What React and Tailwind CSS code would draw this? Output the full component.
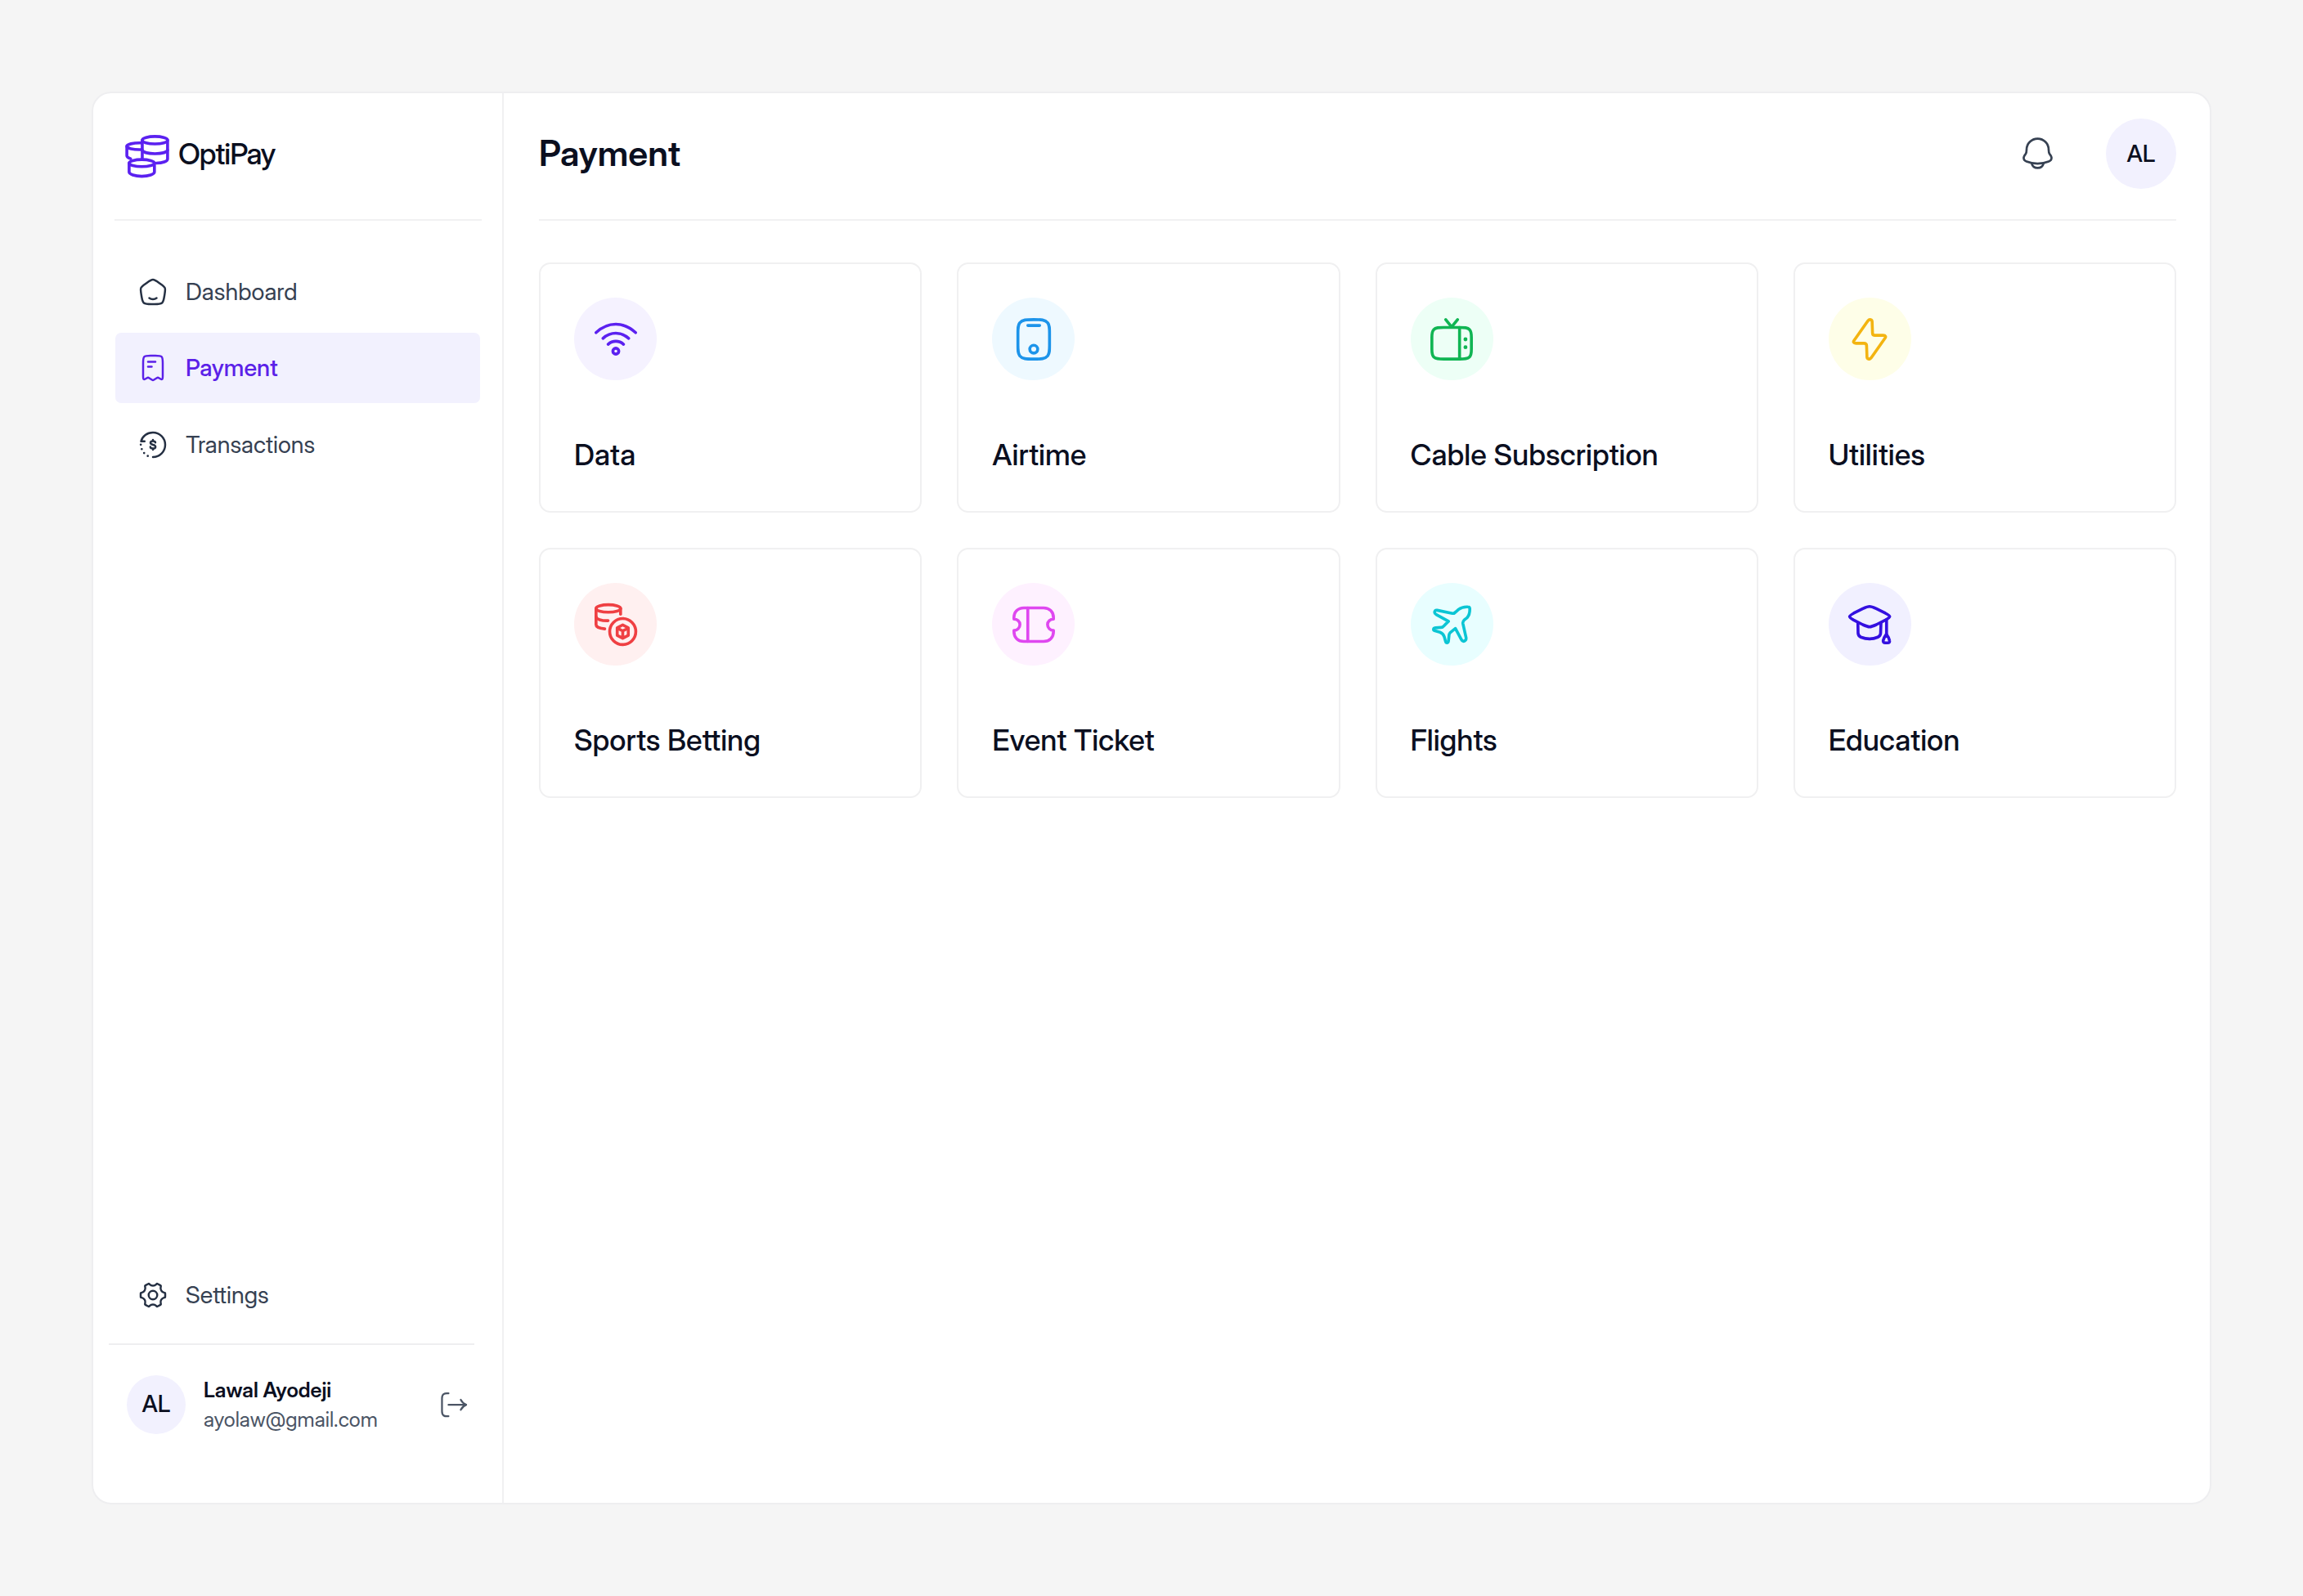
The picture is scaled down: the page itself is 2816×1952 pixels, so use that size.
function Icon({ className, strokeWidth = 1.5, children }) {
  return (
    <svg viewBox="0 0 24 24" fill="none" stroke="currentColor" strokeWidth={strokeWidth} strokeLinecap="round" strokeLinejoin="round" className={className}>
      {children}
    </svg>
  );
}

const LogoMark = (p) => (
  <Icon {...p}>
    <ellipse cx="15.9" cy="3.9" rx="6.4" ry="1.9" />
    <path d="M9.5 3.9V13.2" />
    <path d="M22.3 3.9V13.4C22.3 14.6 19.8 15.5 16.6 15.5" />
    <path d="M9.5 9C9.9 10 12.6 10.75 15.9 10.75S21.9 10 22.3 9" />
    <path d="M9 5.3C4.8 5.2 1.7 6 1.7 7S4.8 8.8 9 8.7" />
    <path d="M1.7 7V11.8C1.7 12.5 2.4 12.9 3.6 13.3" />
    <ellipse cx="9.25" cy="15.5" rx="6.4" ry="1.8" />
    <path d="M2.85 15.5V20C2.85 21.2 5.7 22.2 9.25 22.2S15.65 21.2 15.65 20V15.5" />
  </Icon>
);

const HomeIcon = (p) => (
  <Icon {...p}>
    <path d="M15 17C14.2 17.62 13.15 18 12 18C10.85 18 9.8 17.62 9 17" />
    <path d="M2.35139 13.2135C1.99837 10.9162 1.82186 9.76763 2.25617 8.74938C2.69047 7.73112 3.65403 7.03443 5.58114 5.64106L7.02099 4.6C9.41829 2.86667 10.6169 2 12 2C13.3831 2 14.5817 2.86667 16.979 4.6L18.4189 5.64106C20.346 7.03443 21.3095 7.73112 21.7438 8.74938C22.1781 9.76763 22.0016 10.9162 21.6486 13.2135L21.3476 15.1724C20.8471 18.4289 20.5969 20.0572 19.429 21.0286C18.2611 22 16.5537 22 13.1388 22H10.8612C7.44633 22 5.73891 22 4.571 21.0286C3.40309 20.0572 3.15287 18.4289 2.65243 15.1724L2.35139 13.2135Z" />
  </Icon>
);

const InvoiceIcon = (p) => (
  <Icon {...p}>
    <path d="M4 18.6458V8.05426C4 5.20025 4 3.77325 4.87868 2.88663C5.75736 2 7.17157 2 10 2H14C16.8284 2 18.2426 2 19.1213 2.88663C20 3.77325 20 5.20025 20 8.05426V18.6458C20 20.1575 20 20.9133 19.538 21.2108C18.7831 21.6971 17.6161 20.6774 17.0291 20.3073C16.5441 20.0014 16.3017 19.8485 16.0325 19.8397C15.7417 19.8301 15.4949 19.9768 14.9709 20.3073L13.06 21.5124C12.5445 21.8374 12.2868 22 12 22C11.7132 22 11.4555 21.8374 10.94 21.5124L9.02913 20.3073C8.54415 20.0014 8.30166 19.8485 8.03253 19.8397C7.74172 19.8301 7.49493 19.9768 6.97087 20.3073C6.38395 20.6774 5.21687 21.6971 4.46195 21.2108C4 20.9133 4 20.1575 4 18.6458Z" />
    <path d="M11 11H8" />
    <path d="M14 7H8" />
  </Icon>
);

const HistoryIcon = (p) => (
  <Icon {...p}>
    <path d="M12 22C17.5228 22 22 17.5228 22 12C22 6.47715 17.5228 2 12 2C7.3 2 3.4 4.9 2.3 9.2H5.2" />
    <path d="M2.1 11.9V11.91M2.9 15.5V15.51M4.8 18.7V18.71M7.8 21.1V21.11" strokeWidth="1.8" />
    <path d="M14 10.2C13.9 9.5 13.1 9 12 9C10.8 9 10 9.6 10 10.4C10 12.5 14.1 11.4 14.1 13.6C14.1 14.4 13.2 15 12 15C10.8 15 9.9 14.5 9.9 13.7M12 8V9M12 15V16" />
  </Icon>
);

const SettingsIcon = (p) => (
  <Icon {...p}>
    <circle cx="12" cy="12" r="3.5" />
    <path d="M21.011 14.0965C21.5329 13.9558 21.7939 13.8854 21.8969 13.7508C22 13.6163 22 13.3998 22 12.9669V11.0332C22 10.6003 22 10.3838 21.8969 10.2493C21.7938 10.1147 21.5329 10.0443 21.011 9.90358C19.0606 9.37759 17.8399 7.33851 18.3433 5.40087C18.4817 4.86799 18.5509 4.60156 18.4848 4.44529C18.4187 4.28902 18.2291 4.18134 17.8497 3.96596L16.125 2.98673C15.7528 2.77539 15.5667 2.66972 15.3997 2.69222C15.2326 2.71472 15.0442 2.90273 14.6672 3.27873C13.208 4.73448 10.7936 4.73442 9.33434 3.27864C8.95743 2.90263 8.76898 2.71463 8.60193 2.69212C8.43489 2.66962 8.24877 2.77529 7.87653 2.98663L6.15184 3.96587C5.77253 4.18123 5.58287 4.28891 5.51678 4.44515C5.45068 4.6014 5.51987 4.86787 5.65825 5.4008C6.16137 7.3385 4.93972 9.37763 2.98902 9.9036C2.46712 10.0443 2.20617 10.1147 2.10308 10.2492C2 10.3838 2 10.6003 2 11.0332V12.9669C2 13.3998 2 13.6163 2.10308 13.7508C2.20615 13.8854 2.46711 13.9558 2.98902 14.0965C4.9394 14.6225 6.16008 16.6616 5.65672 18.5992C5.51829 19.1321 5.44907 19.3985 5.51516 19.5548C5.58126 19.7111 5.77092 19.8188 6.15025 20.0341L7.87495 21.0134C8.24721 21.2247 8.43334 21.3304 8.6004 21.3079C8.76746 21.2854 8.95588 21.0973 9.33271 20.7213C10.7927 19.2644 13.2088 19.2643 14.6689 20.7212C15.0457 21.0973 15.2341 21.2853 15.4012 21.3078C15.5682 21.3303 15.7544 21.2246 16.1266 21.0133L17.8513 20.034C18.2307 19.8187 18.4204 19.711 18.4864 19.5547C18.5525 19.3984 18.4833 19.132 18.3448 18.5991C17.8412 16.6616 19.0609 14.6226 21.011 14.0965Z" />
  </Icon>
);

const LogoutIcon = (p) => (
  <Icon {...p}>
    <path d="M7.6 2.8C4 2.4 2.3 3.4 2.3 6.8V17.4C2.3 20.8 4 21.8 7.6 21.4" />
    <path d="M7.6 12.1H21.8" />
    <path d="M17.6 8C18.6 9.9 20.2 11.4 22 12.1C20.2 12.8 18.6 14.3 17.6 16.2" />
  </Icon>
);

const BellIcon = (p) => (
  <Icon {...p}>
    <path d="M2.52992 14.7696C2.31727 16.1636 3.268 17.1312 4.43205 17.6134C8.89481 19.4622 15.1052 19.4622 19.5679 17.6134C20.732 17.1312 21.6827 16.1636 21.4701 14.7696C21.3394 13.9129 20.6932 13.1995 20.2144 12.5029C19.5873 11.5793 19.525 10.5718 19.5249 9.5C19.5249 5.35786 16.1559 2 12 2C7.84413 2 4.47513 5.35786 4.47513 9.5C4.47503 10.5718 4.41272 11.5793 3.78561 12.5029C3.30684 13.1995 2.66061 13.9129 2.52992 14.7696Z" />
    <path d="M8 19C8.45849 20.7252 10.0755 22 12 22C13.9245 22 15.5415 20.7252 16 19" />
  </Icon>
);

const WifiIcon = (p) => (
  <Icon {...p}>
    <circle cx="12" cy="18" r="1.5" />
    <path d="M8.1 14.5C10.3 12.5 13.7 12.5 15.9 14.5" />
    <path d="M5.5 11.5C9.3 8.05 14.7 8.05 18.5 11.5" />
    <path d="M2 8.6C8.03 2.95 15.97 2.95 22 8.6" />
  </Icon>
);

const PhoneIcon = (p) => (
  <Icon {...p}>
    <path d="M4 9C4 6.2 4 4.9 4.9 3.7C6.3 2 8.2 2 12 2S17.7 2 19.1 3.7C20 4.9 20 6.2 20 9V15C20 17.8 20 19.1 19.1 20.3C17.7 22 15.8 22 12 22S6.3 22 4.9 20.3C4 19.1 4 17.8 4 15Z" />
    <path d="M9 5H15" />
    <circle cx="12" cy="17" r="2" />
  </Icon>
);

const TvIcon = (p) => (
  <Icon {...p}>
    <path d="M2 11C2 9.1 2 8 2.9 7.1C3.9 6 5.5 6 8 6H16C18.5 6 20.1 6 21.1 7.1C22 8 22 9.1 22 11V17C22 18.9 22 20 21.1 20.9C20.1 22 18.5 22 16 22H8C5.5 22 3.9 22 2.9 20.9C2 20 2 18.9 2 17Z" />
    <path d="M9 2L12 5.7L15 2" />
    <path d="M16 6V22" />
    <path d="M19 12V12.01M19 16V16.01" strokeWidth="2" />
  </Icon>
);

const BoltIcon = (p) => (
  <Icon {...p}>
    <path d="M4.3 12.4L11.2 2.6C12 1.6 13.3 2 13.3 3.1L13.5 8.8C13.55 9.6 14 10 14.8 10H18.9C20.1 10 20.5 10.7 19.7 11.6L12.8 21.4C12 22.4 10.7 22 10.7 20.9L10.5 15.2C10.45 14.4 10 14 9.2 14H5.1C3.9 14 3.5 13.3 4.3 12.4Z" />
  </Icon>
);

const BettingIcon = (p) => (
  <Icon {...p}>
    <ellipse cx="8.2" cy="3.8" rx="6.2" ry="1.9" />
    <path d="M14.4 3.8V6.7" />
    <path d="M2 3.8V12C2 13.1 3.8 13.9 6.4 14.1" />
    <path d="M2 8C2 9.2 4.8 10.1 8.1 10" />
    <circle cx="15.5" cy="15.5" r="6.6" />
    <path d="M15.5 12.1L18.3 13.6V17.4L15.5 18.9L12.7 17.4V13.6ZM12.7 13.7L15.5 15.2L18.3 13.7M15.5 15.2V18.9" />
  </Icon>
);

const TicketIcon = (p) => (
  <Icon {...p}>
    <path d="M2 9.2V8.5C2 5.5 4 3.5 7 3.5H17C20 3.5 22 5.5 22 8.5V9.2C20.3 9.2 19 10.4 19 12S20.3 14.9 22 14.9V15.5C22 18.5 20 20.5 17 20.5H7C4 20.5 2 18.5 2 15.5V14.9C3.7 14.9 5 13.6 5 12S3.7 9.2 2 9.2Z" />
    <path d="M9 3.5V20.5" />
  </Icon>
);

const PlaneIcon = (p) => (
  <Icon {...p}>
    <path d="M4.7 4.7L12.4 6.3C13.1 6.45 13.5 6.2 14 5.6L15.5 4.3C17 3.1 18.5 2.9 20.2 3C21 3 21.2 3.3 21.2 4C21.2 5.9 21.1 7 19.9 8.4L18.3 9.7C17.7 10.3 17.6 10.7 17.7 11.4L19.3 18.6C19.5 20.3 17.7 21.1 16.9 19.5L13.9 13.9L11.2 16.1C10.8 16.5 10.7 16.8 10.7 17.3L10.4 20.2C10.3 21.4 9.2 21.5 8.9 20.4L8.3 18.2C8 17.1 7.4 16.3 6.1 15.8L3.6 15.1C2.5 14.8 2.6 13.8 3.8 13.6L6.7 13.4C7.3 13.4 7.6 13.2 7.9 12.8L10.4 10.3L4.2 6.9C2.8 6.1 3.4 4.4 4.7 4.7Z" />
  </Icon>
);

const CapIcon = (p) => (
  <Icon {...p}>
    <path d="M1.9 7.9C1.9 7.4 2.6 7 4 6.2L8.6 3.9C10.3 3.1 11 2.8 12 2.8S13.7 3.1 15.4 3.9L20 6.2C21.4 7 22.2 7.4 22.2 7.9S21.4 8.9 20 9.7L15.4 12C13.7 12.8 13 13.1 12 13.1S10.3 12.8 8.6 12L4 9.7C2.6 8.9 1.9 8.4 1.9 7.9Z" />
    <path d="M6.1 11L6.2 16.2C6.2 17.4 6.5 17.8 7.6 18.3C10.3 19.4 13.7 19.4 16.2 18.3C17.3 17.8 17.6 17.4 17.6 16.2L17.8 11" />
    <path d="M20.6 9.4V16.8" />
    <path d="M20.5 16.8C19.6 18 19.2 18.8 18.9 20C18.8 20.9 19.1 21.2 20 21.2H21.1C22 21.2 22.3 20.9 22.1 20C21.9 18.8 21.4 18 20.5 16.8Z" />
  </Icon>
);

const navItems = [
  { label: "Dashboard", Glyph: HomeIcon },
  { label: "Payment", Glyph: InvoiceIcon, active: true },
  { label: "Transactions", Glyph: HistoryIcon },
];

const services = [
  { label: "Data", Glyph: WifiIcon, tone: "bg-[#f5f2ff] text-[#5b21f0]" },
  { label: "Airtime", Glyph: PhoneIcon, tone: "bg-[#eef9ff] text-[#1d94ea]" },
  { label: "Cable Subscription", Glyph: TvIcon, tone: "bg-[#edfff6] text-[#10b553]" },
  { label: "Utilities", Glyph: BoltIcon, tone: "bg-[#fefee8] text-[#f3b411]" },
  { label: "Sports Betting", Glyph: BettingIcon, tone: "bg-[#fff0f0] text-[#ef4043]" },
  { label: "Event Ticket", Glyph: TicketIcon, tone: "bg-[#fef1ff] text-[#df47f0]" },
  { label: "Flights", Glyph: PlaneIcon, tone: "bg-[#e8feff] text-[#0bc5d4]" },
  { label: "Education", Glyph: CapIcon, tone: "bg-[#f1f0ff] text-[#3410e0]" },
];

function NavItem({ label, Glyph, active }) {
  return (
    <a className={active ? "flex h-[86px] items-center gap-[22px] rounded-[7px] bg-[#f2f1fe] pl-[28px] font-medium text-[#5b21e8]" : "flex h-[86px] items-center gap-[22px] rounded-[7px] pl-[28px] text-[#364152]"}>
      <Glyph strokeWidth={1.65} className={active ? "size-[36px]" : "size-[36px] text-[#253043]"} />
      <span className="text-[28.8px]">{label}</span>
    </a>
  );
}

export default function App() {
  return (
    <div className="flex h-[1952px] w-[2816px] bg-[#f5f5f5] pt-[112px] pl-[112px] font-['Inter_Display','Inter',sans-serif] text-[#0b0f1f]">
      <div className="flex h-[1728px] w-[2592px] overflow-hidden rounded-[24px] border-2 border-[#eeeef0] bg-white">
        <aside className="flex w-[502px] flex-col border-r-2 border-[#f0f0f2]">
          <div className="mr-[25px] ml-[26px] flex h-[156px] items-center gap-[9px] border-b-2 border-[#f1f1f2] pl-[11px]">
            <LogoMark className="size-[58px] text-[#5b21f0]" />
            <span className="mb-[7px] text-[36px] font-medium tracking-[-0.03em]">OptiPay</span>
          </div>
          <nav className="mx-[27px] mt-[43.5px] flex flex-col gap-[7.5px]">
            {navItems.map((item) => <NavItem key={item.label} {...item} />)}
          </nav>
          <div className="mx-[27px] mt-auto">
            <NavItem label="Settings" Glyph={SettingsIcon} />
          </div>
          <div className="mt-[16px] mb-[84px] ml-[19px] flex w-[447px] items-center border-t-2 border-[#eeeef0] pt-[37px] pl-[22px]">
            <div className="flex size-[72px] items-center justify-center rounded-full bg-[#f2f1fe] pb-[3px]">
              <span className="text-[28.8px] font-medium">AL</span>
            </div>
            <div className="ml-[22px] flex flex-col text-[25.2px] leading-[36px]">
              <span className="font-semibold">Lawal Ayodeji</span>
              <span className="text-[#4b5565]">ayolaw@gmail.com</span>
            </div>
            <LogoutIcon className="mr-[7px] ml-auto size-[36px] text-[#4b5565]" />
          </div>
        </aside>
        <main className="flex-1 pr-[41px] pl-[43px]">
          <header className="flex h-[156px] items-center border-b-2 border-[#f1f1f2] pb-[7px]">
            <h1 className="text-[43.2px] font-semibold">Payment</h1>
            <BellIcon className="ml-auto size-[43px] text-[#364152]" />
            <div className="ml-[62px] flex size-[86px] items-center justify-center rounded-full bg-[#f2f1fe]">
              <span className="text-[28.8px] font-medium">AL</span>
            </div>
          </header>
          <section className="mt-[51px] grid grid-cols-4 gap-[43px]">
            {services.map(({ label, Glyph, tone }) => (
              <article key={label} className="flex h-[306px] flex-col rounded-[14px] border-2 border-[#f0f0f1] px-[41px] pt-[41px]">
                <div className={`flex size-[101px] items-center justify-center rounded-full ${tone}`}>
                  <Glyph className="size-[58px]" />
                </div>
                <h2 className="mt-[64px] text-[36px] leading-[54px] font-medium">{label}</h2>
              </article>
            ))}
          </section>
        </main>
      </div>
    </div>
  );
}
